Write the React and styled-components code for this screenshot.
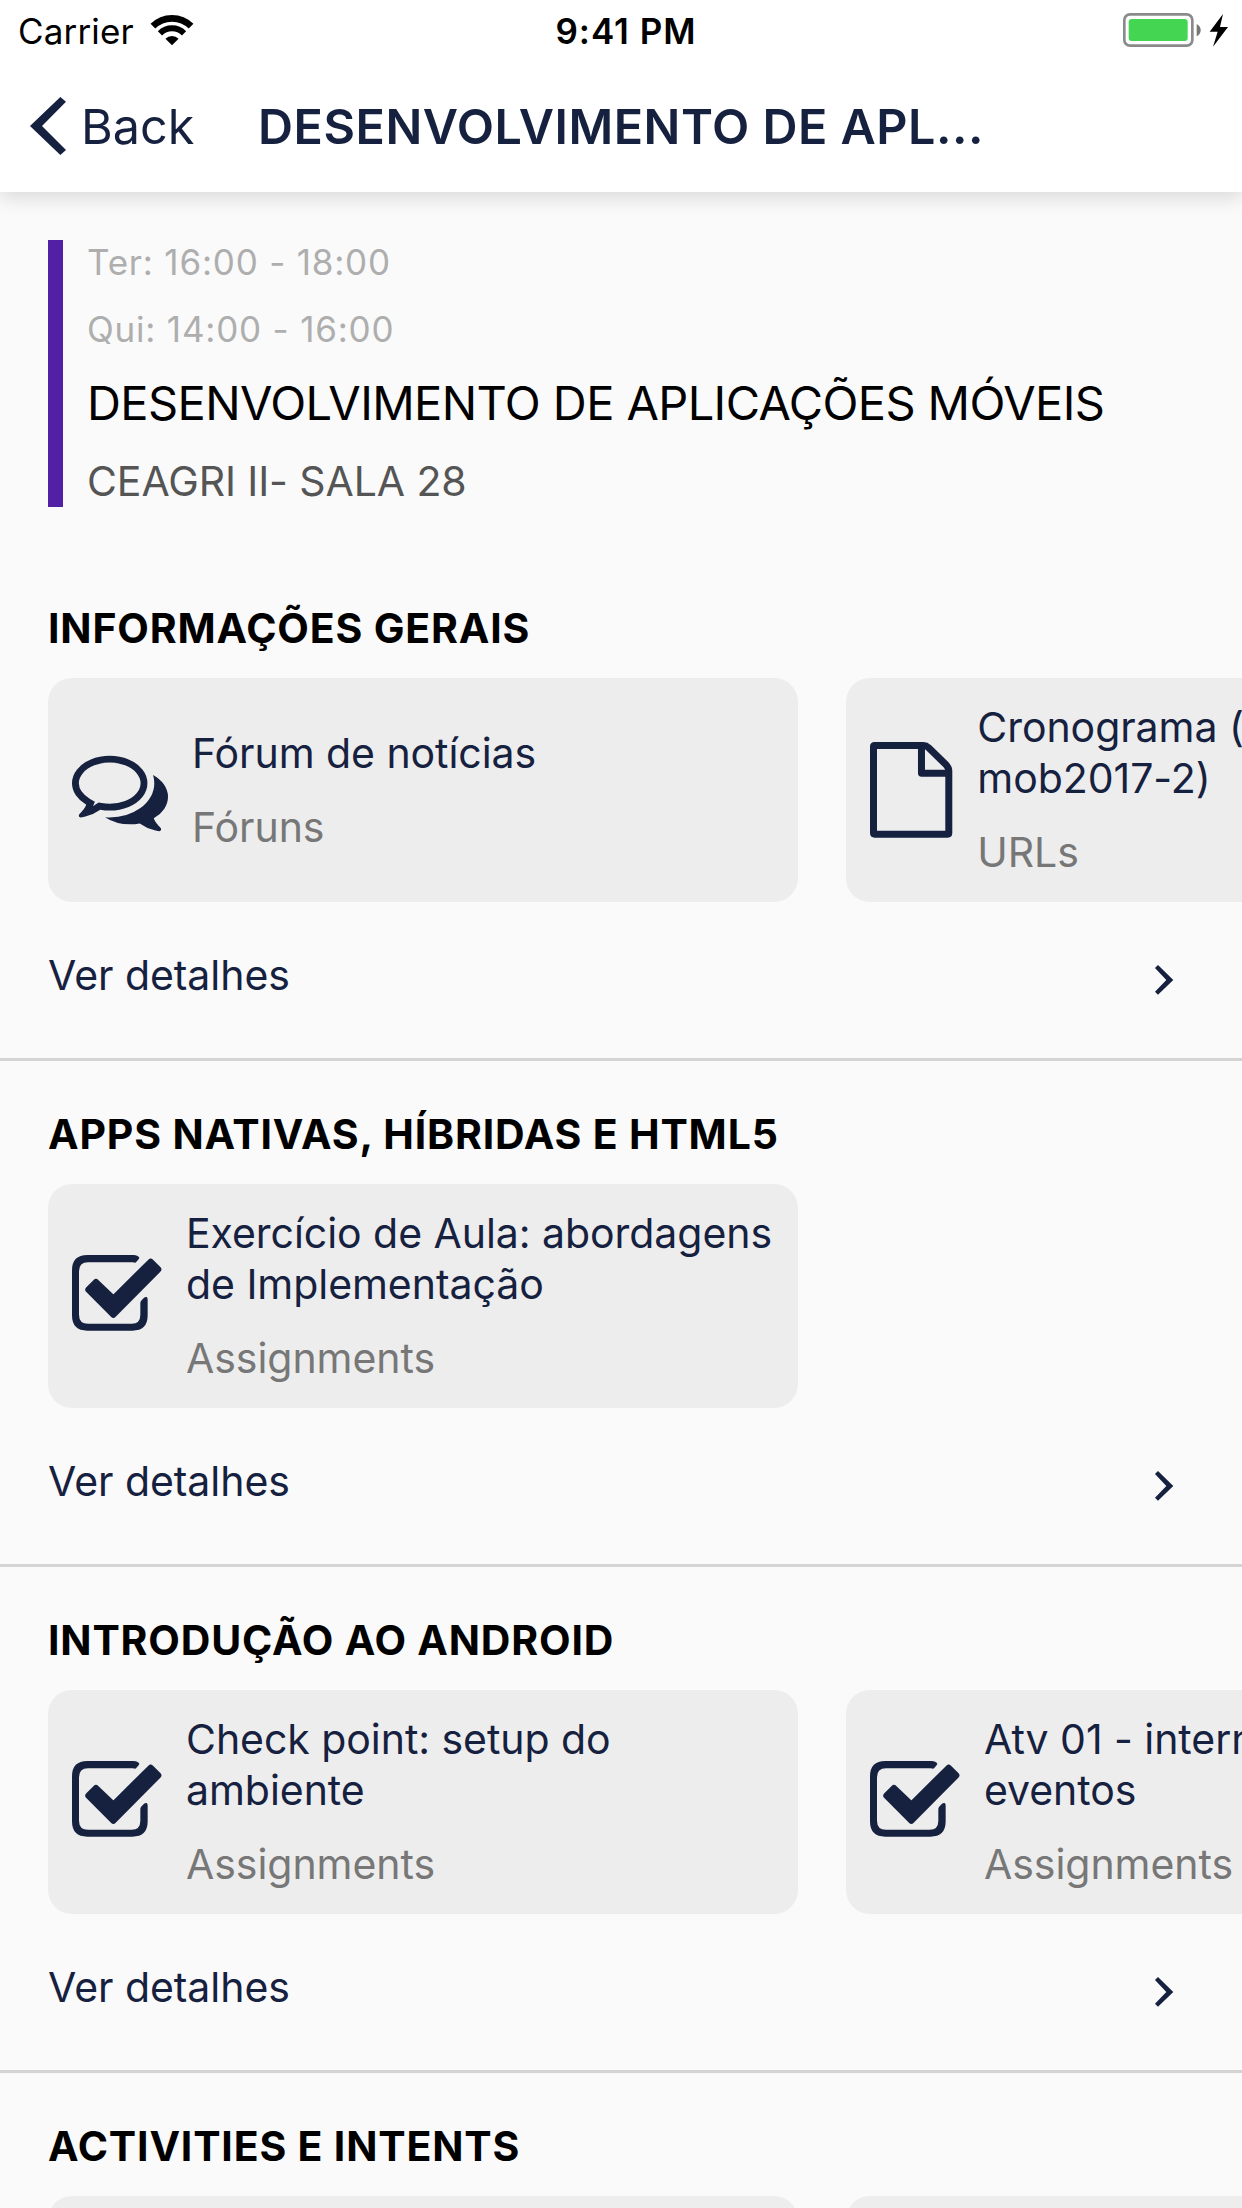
import React from 'react';
import styled, { createGlobalStyle } from 'styled-components';

const NAVY = '#16213f';

const GlobalStyle = createGlobalStyle`
  * {
    box-sizing: border-box;
  }

  body {
    margin: 0;
    background: #fafafa;
    font-family: Inter, 'Liberation Sans', sans-serif;
  }
`;

const Screen = styled.div`
  width: 1242px;
  height: 2208px;
  overflow: hidden;
  background: #fafafa;
`;

const Header = styled.header`
  height: 192px;
  background: #fff;
  box-shadow: 0 6px 18px rgba(0, 0, 0, 0.13);
`;

const StatusBar = styled.div`
  height: 60px;
  padding: 0 14px 0 18px;
  display: grid;
  grid-template-columns: 1fr auto 1fr;
  align-items: center;
`;

const StatusGroup = styled.div`
  display: flex;
  align-items: center;
  justify-content: ${props => props.$end ? 'flex-end' : 'flex-start'};
  gap: 17px;
`;

const StatusText = styled.span`
  padding-top: 2px;
  padding-left: ${props => props.$strong ? '6px' : '0'};
  font-size: 35px;
  line-height: 58px;
  font-weight: ${props => props.$strong ? 600 : 400};
  letter-spacing: ${props => props.$strong ? '1px' : '0.15px'};
  color: #000;
`;

const NavBar = styled.nav`
  height: 132px;
  padding: 0 30px;
  display: grid;
  grid-template-columns: 1fr auto 1fr;
  align-items: center;
  color: ${NAVY};
`;

const BackButton = styled.div`
  display: flex;
  align-items: center;
  gap: 15px;
`;

const BackLabel = styled.span`
  padding-top: 2px;
  font-size: 48.5px;
  line-height: 60px;
`;

const NavTitle = styled.h1`
  margin: 0;
  padding-top: 2px;
  font-size: 48.5px;
  line-height: 60px;
  font-weight: 600;
  letter-spacing: 0.5px;
`;

const CourseInfo = styled.div`
  height: 267px;
  margin: 48px 48px;
  padding-left: 24px;
  border-left: 15px solid #5220a5;
`;

const Schedule = styled.p`
  margin: 0;
  font-size: 35px;
  line-height: 45px;
  padding-bottom: 22px;
  letter-spacing: 0.8px;
  color: #aeaeae;
`;

const CourseName = styled.h2`
  margin: -1px 0 0;
  font-size: 47px;
  line-height: 60px;
  font-weight: 400;
  letter-spacing: -0.6px;
  color: #000;
`;

const Room = styled.p`
  margin: 20px 0 0;
  font-size: 41px;
  line-height: 57px;
  letter-spacing: -0.1px;
  color: #555;
`;

const Section = styled.section`
  height: 506px;
  padding-top: 48px;
  border-bottom: 3px solid #d4d4d4;
`;

const SectionTitle = styled.h3`
  margin: 0 48px 25px;
  font-size: 41px;
  line-height: 50px;
  font-weight: 700;
  letter-spacing: 0.82px;
  color: #000;
`;

const CardList = styled.div`
  display: flex;
  gap: 48px;
  padding-left: 48px;
  overflow: hidden;
`;

const Card = styled.div`
  flex: none;
  width: 750px;
  height: 224px;
  padding: 0 24px;
  display: flex;
  align-items: center;
  gap: 24px;
  background: #ededed;
  border-radius: 24px;
`;

const CardText = styled.div`
  font-size: 41px;
  line-height: 51px;
  letter-spacing: -0.05px;
  white-space: pre-line;
`;

const CardTitle = styled.div`
  color: ${NAVY};
`;

const CardType = styled.div`
  margin-top: 23px;
  color: #777;
`;

const DetailsLink = styled.div`
  margin: 48px 69px 0 48px;
  display: flex;
  justify-content: space-between;
  align-items: center;
  font-size: 41px;
  line-height: 50px;
  letter-spacing: -0.05px;
  color: ${NAVY};
`;

const Icon = styled.svg`
  display: block;
  flex: none;
  overflow: visible;
`;

const DocIcon = styled(Icon)`
  margin-right: 1px;
`;

const CheckIcon = styled(Icon)`
  margin: 0 1px 6px 0;
`;

const DetailsChevron = styled(Icon)`
  margin-top: 9px;
`;

const Wifi = () => (
  <Icon width="42" height="30.3" viewBox="450 44 126 91" fill="none" stroke="#000">
    <path d="M455.7 77.7A81 81 0 0 1 570.3 77.7" strokeWidth="20" />
    <path d="M476.9 98.9A51 51 0 0 1 549.1 98.9" strokeWidth="18" />
    <path d="M513 135L493.2 115.2A28 28 0 0 1 532.8 115.2Z" fill="#000" stroke="none" />
  </Icon>
);

const Battery = () => (
  <Icon width="105" height="34" viewBox="31 39 315 102">
    <rect x="35" y="43" width="204" height="94" rx="17" fill="none" stroke="#8a8a8a" strokeWidth="8" />
    <rect x="48" y="57" width="177" height="66" rx="9" fill="#44d552" />
    <path d="M252 72Q264 79 264 90.5Q264 102 252 109Z" fill="#777" />
    <path d="M331 42L291 95H315L301 140L346 81H322Z" fill="#000" />
  </Icon>
);

const Comments = () => (
  <Icon width="96" height="96" viewBox="0 0 1792 1792" fill={NAVY}>
    <path d="M704 384q-153 0-286 52t-211.5 141-78.5 191q0 82 53 158t149 132l97 56-35 84q34-20 62-39l44-31 53 10q78 14 153 14 153 0 286-52t211.5-141 78.5-191-78.5-191-211.5-141-286-52zm0-128q191 0 353.5 68.5t256.5 186.5 94 257-94 257-256.5 186.5-353.5 68.5q-86 0-176-16-124 88-278 128-36 9-86 16h-3q-11 0-20.5-8t-11.5-21q-1-3-1-6.5t.5-6.5 2-6l2.5-5 3.5-5.5 4-5 4.5-5 4-4.5q5-6 23-25t26-29.5 22.5-29 25-38.5 20.5-44q-124-72-195-177t-71-224q0-139 94-257t256.5-186.5 353.5-68.5zm822 1169q10 24 20.5 44t25 38.5 22.5 29 26 29.5 23 25q1 1 4 4.5t4.5 5 4 5 3.5 5.5l2.5 5 2 6 .5 6.5-1 6.5q-3 14-13 22t-22 7q-50-7-86-16-154-40-278-128-90 16-176 16-271 0-472-132 58 4 88 4 161 0 309-45t264-129q125-92 192-212t67-254q0-77-23-152 129 71 204 178t75 230q0 120-71 224.5t-195 176.5z" />
  </Icon>
);

const Doc = () => (
  <DocIcon width="82.3" height="95.7" viewBox="270 277 247 287" fill="none" stroke={NAVY} strokeWidth="21" strokeLinejoin="round">
    <path d="M280.5 291Q280.5 287.5 284 287.5H430Q439 287.5 446 294L499 346Q506.5 354 506.5 364V550Q506.5 553.5 503 553.5H284Q280.5 553.5 280.5 550Z" />
    <path d="M424.5 290V370.5H505" />
  </DocIcon>
);

const Check = () => (
  <CheckIcon width="89" height="75.7" viewBox="270 273 267 227">
    <path d="M270 319Q270 273 316 273H455Q467 273 472 281Q471 286 460 296Q457 295 452 295H318Q291 295 291 322V452Q291 479 318 479H449Q475 479 475 452V416Q476 410 486 401Q490 398 494 399Q497 401 497 407V454Q497 500 451 500H316Q270 500 270 454Z" fill={NAVY} />
    <path d="M320 377L342 355L394 405L506 294L528 316L394 451Z" fill={NAVY} stroke={NAVY} strokeWidth="20" strokeLinejoin="round" />
  </CheckIcon>
);

const icons = {
  forum: Comments,
  url: Doc,
  assignment: Check,
};

const sections = [
  {
    title: 'INFORMAÇÕES GERAIS',
    items: [
      { icon: 'forum', name: 'Fórum de notícias', type: 'Fóruns' },
      { icon: 'url', name: 'Cronograma (\nmob2017-2)', type: 'URLs' },
    ],
  },
  {
    title: 'APPS NATIVAS, HÍBRIDAS E HTML5',
    items: [
      { icon: 'assignment', name: 'Exercício de Aula: abordagens\nde Implementação', type: 'Assignments' },
    ],
  },
  {
    title: 'INTRODUÇÃO AO ANDROID',
    items: [
      { icon: 'assignment', name: 'Check point: setup do\nambiente', type: 'Assignments' },
      { icon: 'assignment', name: 'Atv 01 - intern\neventos', type: 'Assignments' },
    ],
  },
  {
    title: 'ACTIVITIES E INTENTS',
    items: [
      { icon: 'assignment', name: '', type: '' },
      { icon: 'assignment', name: '', type: '' },
    ],
  },
];

const Activity = ({ item }) => {
  const ItemIcon = icons[item.icon];

  return (
    <Card>
      <ItemIcon />
      <CardText>
        <CardTitle>{item.name}</CardTitle>
        <CardType>{item.type}</CardType>
      </CardText>
    </Card>
  );
};

const App = () => (
  <Screen>
    <GlobalStyle />
    <Header>
      <StatusBar>
        <StatusGroup>
          <StatusText>Carrier</StatusText>
          <Wifi />
        </StatusGroup>
        <StatusText $strong>9:41 PM</StatusText>
        <StatusGroup $end>
          <Battery />
        </StatusGroup>
      </StatusBar>
      <NavBar>
        <BackButton>
          <Icon width="36" height="58" viewBox="90 291 108 174" fill={NAVY}>
            <path d="M90 378L181 291L198 305L126 378L198 450L181 465Z" />
          </Icon>
          <BackLabel>Back</BackLabel>
        </BackButton>
        <NavTitle>DESENVOLVIMENTO DE APL...</NavTitle>
      </NavBar>
    </Header>
    <CourseInfo>
      <Schedule>Ter: 16:00 - 18:00</Schedule>
      <Schedule>Qui: 14:00 - 16:00</Schedule>
      <CourseName>DESENVOLVIMENTO DE APLICAÇÕES MÓVEIS</CourseName>
      <Room>CEAGRI II- SALA 28</Room>
    </CourseInfo>
    {sections.map(section => (
      <Section key={section.title}>
        <SectionTitle>{section.title}</SectionTitle>
        <CardList>
          {section.items.map((item, i) => <Activity key={i} item={item} />)}
        </CardList>
        <DetailsLink>
          Ver detalhes
          <DetailsChevron width="18.3" height="29.7" viewBox="1127 943 55 89" fill={NAVY}>
            <path d="M1127 952L1136 943L1182 988L1136 1032L1127 1023L1161 988Z" />
          </DetailsChevron>
        </DetailsLink>
      </Section>
    ))}
  </Screen>
);

export default App;
